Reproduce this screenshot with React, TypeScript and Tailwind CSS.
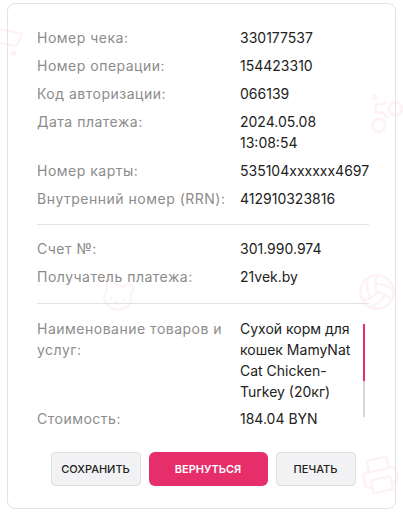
import React from 'react';
import { Bike, Volleyball, Printer, Cat, ShoppingCart } from 'lucide-react';

// Строки чека
const topRows: { label: string; value: string[] }[] = [
  { label: 'Номер чека:', value: ['330177537'] },
  { label: 'Номер операции:', value: ['154423310'] },
  { label: 'Код авторизации:', value: ['066139'] },
  { label: 'Дата платежа:', value: ['2024.05.08', '13:08:54'] },
  { label: 'Номер карты:', value: ['535104xxxxxx4697'] },
  { label: 'Внутренний номер (RRN):', value: ['412910323816'] },
];

const payRows = [
  { label: 'Счет №:', value: '301.990.974' },
  { label: 'Получатель платежа:', value: '21vek.by' },
];

function Row({ label, children }: { label: React.ReactNode; children: React.ReactNode }) {
  return (
    <div className="grid grid-cols-[203px_1fr]">
      <div className="text-[#8c8c8c] tracking-[0.5px]">{label}</div>
      <div className="text-[#222]">{children}</div>
    </div>
  );
}

export default function App() {
  return (
    <div
      className="relative w-[403px] h-[531px] bg-white overflow-hidden text-[14px] leading-[21px]"
      style={{ fontFamily: 'Inter, "Noto Sans", sans-serif' }}
    >
      {/* Фоновый узор */}
      <div className="absolute inset-0 text-[#fdf2f5] pointer-events-none">
        <Bike size={44} strokeWidth={1.5} className="absolute left-[358px] top-[88px] -rotate-45" />
        <Volleyball size={40} strokeWidth={1.5} className="absolute left-[357px] top-[272px]" />
        <Printer size={40} strokeWidth={1.5} className="absolute left-[360px] top-[455px] -rotate-12" />
        <Cat size={36} strokeWidth={1.5} className="absolute left-[100px] top-[278px] rotate-12" />
        <ShoppingCart size={36} strokeWidth={1.5} className="absolute left-[-12px] top-[20px] rotate-12" />
      </div>

      <div className="relative mx-[7px] mt-[3px] rounded-lg border border-[#e3e3e3] pt-[23px] pb-[22px] pl-[29px] pr-[26px]">
        <div className="flex flex-col gap-[7px]">
          {topRows.map(r => (
            <Row key={r.label} label={r.label}>
              {r.value.map(v => (
                <div key={v}>{v}</div>
              ))}
            </Row>
          ))}
        </div>

        <div className="h-px bg-[#e2e2e2] mt-[15px] mb-[13px]" />

        <div className="flex flex-col gap-[7px]">
          {payRows.map(r => (
            <Row key={r.label} label={r.label}>
              {r.value}
            </Row>
          ))}
        </div>

        <div className="h-px bg-[#e2e2e2] mt-[16px] mb-[14px]" />

        {/* Прокручиваемый блок товаров */}
        <div className="relative pr-[10px]">
          <Row label={<span className="block pr-2">Наименование товаров и услуг:</span>}>
            <div className="w-[122px]">Сухой корм для кошек MamyNat Cat Chicken-Turkey (20кг)</div>
          </Row>
          <div className="mt-[6px]">
            <Row label="Стоимость:">184.04 BYN</Row>
          </div>
          <div className="absolute right-[4px] top-[6px] w-[2px] h-[93px] flex flex-col">
            <div className="h-[57px] bg-[#e5306b]" />
            <div className="flex-1 bg-[#d6d6d6]" />
          </div>
        </div>

        <div className="flex justify-center gap-2 mt-[23px] text-[11px] font-medium">
          <button className="w-[90px] h-[34px] rounded bg-[#f2f2f4] border border-[#dedede] text-[#222]">
            СОХРАНИТЬ
          </button>
          <button className="w-[119px] h-[34px] rounded-md bg-[#e62e6b] text-white font-semibold">
            ВЕРНУТЬСЯ
          </button>
          <button className="w-[80px] h-[34px] rounded bg-[#f2f2f4] border border-[#dedede] text-[#222]">
            ПЕЧАТЬ
          </button>
        </div>
      </div>
    </div>
  );
}
